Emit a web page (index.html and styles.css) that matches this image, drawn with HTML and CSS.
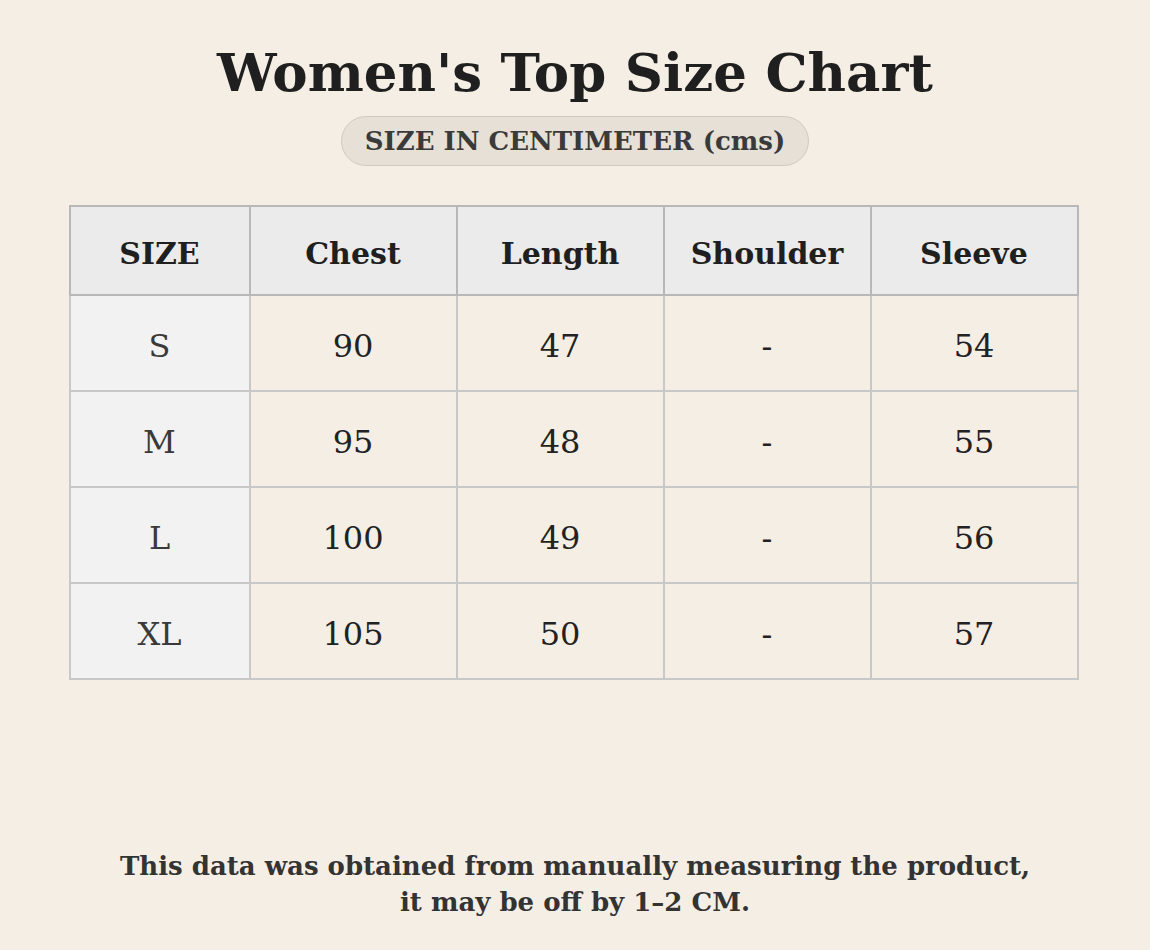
FILE: index.html
```html
<!DOCTYPE html>
<html>
<head>
<meta charset="utf-8">
<link rel="stylesheet" href="styles.css">
</head>
<body>
<div class="page">
  <h1 class="title">Women's Top Size Chart</h1>
  <div class="pill">SIZE IN CENTIMETER (cms)</div>
  <table class="chart">
    <thead>
      <tr><th class="c-size">SIZE</th><th>Chest</th><th>Length</th><th>Shoulder</th><th>Sleeve</th></tr>
    </thead>
    <tbody>
      <tr><td class="c-size">S</td><td>90</td><td>47</td><td>-</td><td>54</td></tr>
      <tr><td class="c-size">M</td><td>95</td><td>48</td><td>-</td><td>55</td></tr>
      <tr><td class="c-size">L</td><td>100</td><td>49</td><td>-</td><td>56</td></tr>
      <tr><td class="c-size">XL</td><td>105</td><td>50</td><td>-</td><td>57</td></tr>
    </tbody>
  </table>
  <p class="note">This data was obtained from manually measuring the product,<br>it may be off by 1–2 CM.</p>
</div>
</body>
</html>
```
FILE: styles.css
```css
html, body {
  margin: 0;
  padding: 0;
  background: #f5eee5;
}
body {
  font-family: "DejaVu Serif", serif;
  color: #222;
}
.page {
  width: 1150px;
  height: 950px;
  display: flex;
  flex-direction: column;
  align-items: center;
}
.title {
  margin: 40px 0 0;
  font-size: 53px;
  line-height: 64px;
  font-weight: bold;
  color: #1f1f1f;
}
.pill {
  margin-top: 12px;
  height: 48px;
  padding: 0 23px;
  display: flex;
  align-items: center;
  background: #e6e0d6;
  border: 1px solid #cfcac2;
  border-radius: 25px;
  font-size: 26px;
  font-weight: bold;
  color: #3a3a3a;
}
.chart {
  margin-top: 39px;
  margin-left: -3px;
  border-collapse: collapse;
  width: 1010px;
  table-layout: fixed;
}
.chart th, .chart td {
  text-align: center;
  padding: 0;
}
.chart th {
  height: 82px;
  padding-top: 5px;
  background: #ebebeb;
  border: 2px solid #b8b8b8;
  font-size: 30px;
  font-weight: bold;
  color: #1f1f1f;
}
.chart th.c-size {
  width: 178px;
}
.chart td {
  height: 88px;
  padding-top: 6px;
  border: 2px solid #c8c8c8;
  font-size: 32px;
  color: #222;
}
.chart td.c-size {
  background: #f2f2f2;
  color: #3a3a3a;
}
.note {
  margin: auto 0 30px;
  text-align: center;
  font-size: 26px;
  line-height: 36px;
  font-weight: bold;
  color: #333;
}
```
